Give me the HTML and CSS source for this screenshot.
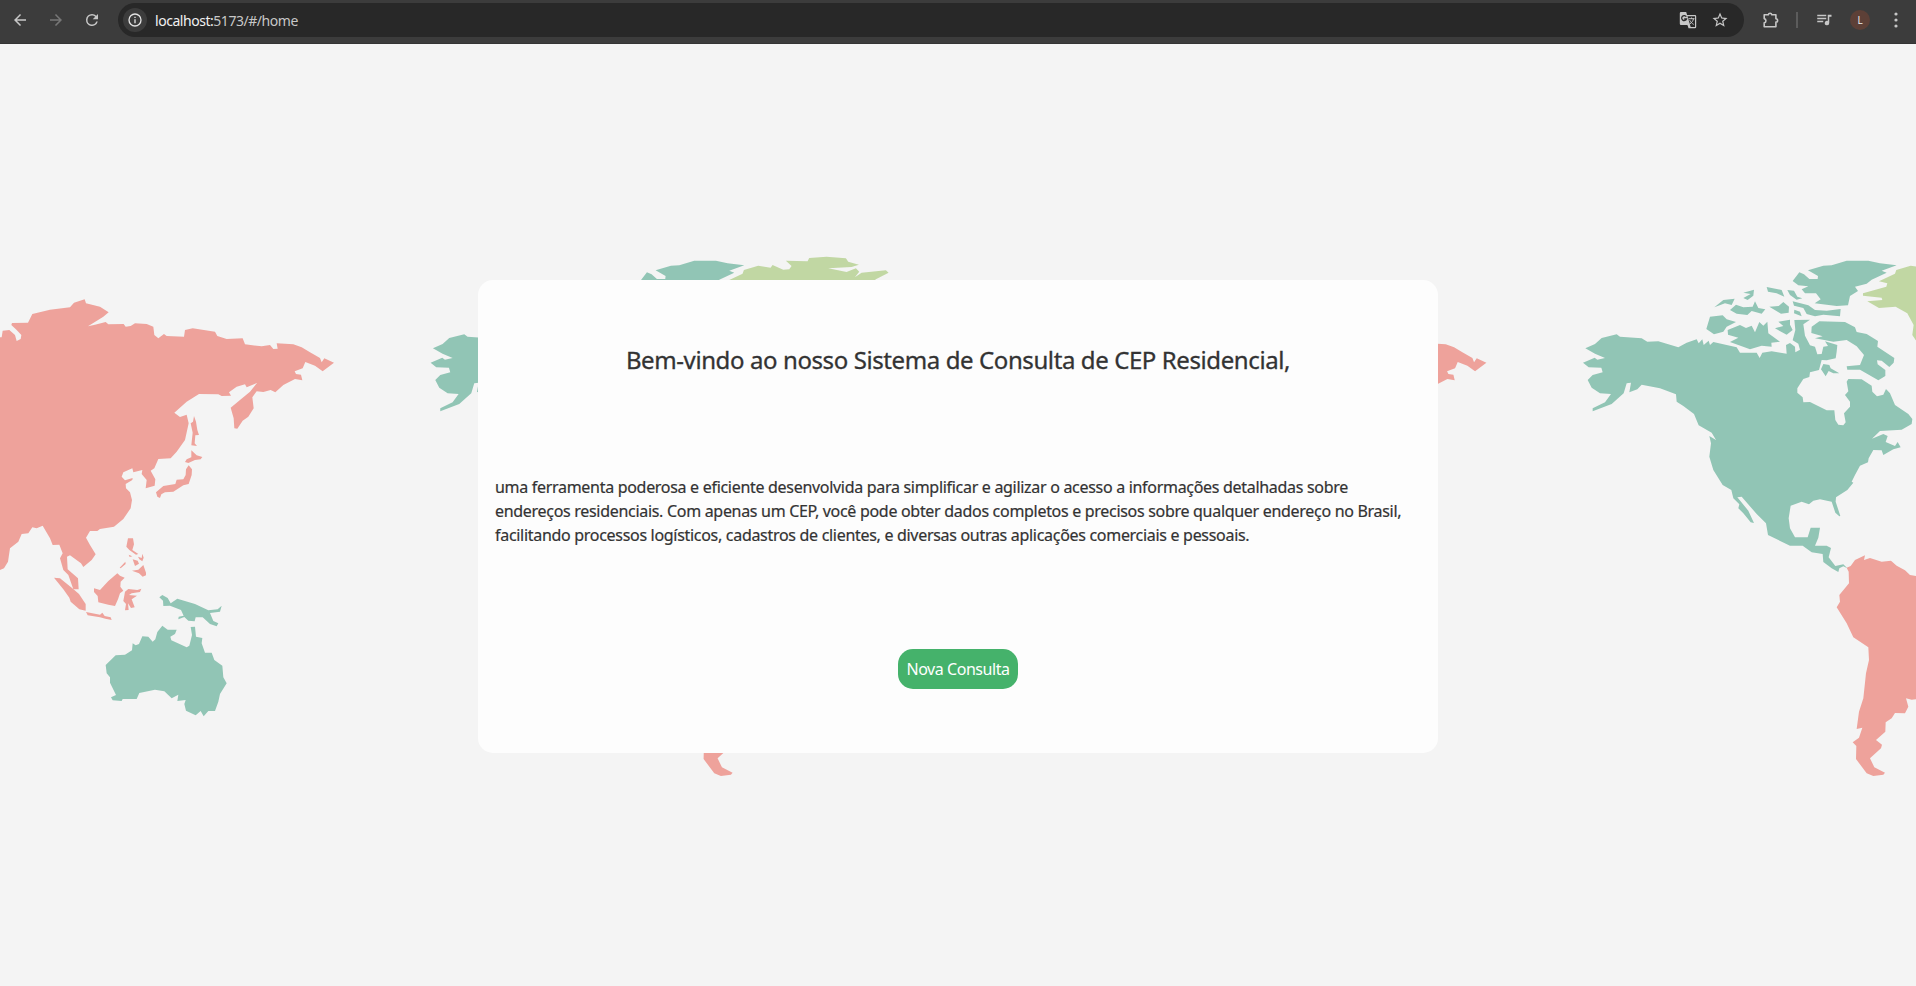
FILE: index.html
```html
<!DOCTYPE html>
<html lang="pt-BR">
<head>
<meta charset="utf-8">
<title>Consulta de CEP</title>
<link rel="stylesheet" href="styles.css">
</head>
<body>
<header class="toolbar">
  <nav class="nav">
    <svg class="icon" viewBox="0 0 24 24"><path d="M20 11H7.83l5.59-5.59L12 4l-8 8 8 8 1.41-1.41L7.83 13H20z"/></svg>
    <svg class="icon dim" viewBox="0 0 24 24"><path d="M4 13h12.17l-5.59 5.59L12 20l8-8-8-8-1.41 1.41L16.17 11H4z"/></svg>
    <svg class="icon" viewBox="0 0 24 24"><path d="M17.65 6.35A7.96 7.96 0 0 0 12 4a8 8 0 1 0 7.73 10h-2.08A6 6 0 1 1 12 6c1.66 0 3.14.69 4.22 1.78L13 11h7V4z"/></svg>
  </nav>
  <div class="address">
    <span class="info"><svg class="info-icon" viewBox="0 0 24 24"><path d="M11 7h2v2h-2zm0 4h2v6h-2zm1-9a10 10 0 1 0 0 20 10 10 0 0 0 0-20zm0 18a8 8 0 1 1 0-16 8 8 0 0 1 0 16z"/></svg></span>
    <span class="url"><b>localhost:</b>5173/#/home</span>
    <svg class="translate" viewBox="0 0 18 18"><path d="M2 1h5.200l.9 3H16a1.200 1.200 0 0 1 1.200 1.200V16a1.200 1.200 0 0 1-1.200 1.200H9.500L8.600 14H2A1.200 1.200 0 0 1 .8 12.800V2.200A1.200 1.200 0 0 1 2 1zm6.500 4.200 3.200 10.800h4.300V5.200z" fill-rule="evenodd"/><path class="g-mark" d="M7.300 5.700A2.500 2.500 0 1 0 7.500 8H5.200"/><path class="g-line" d="M9.500 7.700h6M12.500 6.500v1.200M14.500 7.700c-.4 2.200-1.800 4-3.800 5.300M10.700 9.200c.8 1.700 2.200 3.200 4 4.200M9 14.200l1.500 2.200"/></svg>
    <svg class="star" viewBox="0 0 24 24"><path d="m22 9.240-7.190-.62L12 2 9.190 8.630 2 9.240l5.460 4.730L5.820 21 12 17.270 18.180 21l-1.630-7.030zM12 15.400l-3.760 2.270 1-4.280-3.320-2.880 4.380-.38L12 6.100l1.710 4.040 4.380.38-3.320 2.880 1 4.280z"/></svg>
  </div>
  <div class="tools">
    <svg class="puzzle" viewBox="0 0 18 18"><path d="M2.200 3.700h4.100a1.800 1.800 0 0 1 3.500 0h4.100v4a1.700 1.700 0 0 1 0 3.400v4.700H2.200v-3.900a2.200 2.200 0 0 0 0-4.300z"/></svg>
    <span class="divider"></span>
    <svg class="music" viewBox="0 0 24 24"><path d="M3 5h12v2H3zm0 4h12v2H3zm0 4h8v2H3zM17 5h5v2.500h-3V16a3 3 0 1 1-2-2.830z"/></svg>
    <span class="avatar">L</span>
    <svg class="dots" viewBox="0 0 6 18"><circle cx="3" cy="3" r="1.600"/><circle cx="3" cy="9" r="1.600"/><circle cx="3" cy="15" r="1.600"/></svg>
  </div>
</header>
<main class="page">
  <svg class="map" viewBox="0 44 1916 942">
    <defs>
      <g id="asia" class="coral">
        <g transform="translate(0 280) scale(.33333)">
          <path d="M-5 172 5 172 8 152 28 150 45 165 50 183 62 177 64 165 50 150 34 135 36 129 84 128 97 102 150 89 210 82 222 68 254 58 258 70 300 80 326 97 310 110 264 139 285 134 317 126 325 133 371 132 377 140 392 138 405 130 440 132 460 140 463 165 475 175 492 162 500 168 552 170 555 150 578 145 645 155 652 168 680 177 728 175 735 193 785 199 810 195 820 207 833 206 830 190 880 193 905 202 930 217 960 234 965 247 973 235 1002 248 968 274 945 257 916 246 908 265 884 274 888 282 903 284 907 301 885 297 850 315 826 337 812 330 790 336 770 334 757 352 761 385 745 410 728 422 712 446 703 445 701 415 692 383 720 360 750 335 771 309 740 322 735 313 710 320 687 337 693 347 665 348 655 343 597 342 560 365 523 398 540 411 560 404 566 430 555 480 530 515 512 535 475 537 463 565 452 572 466 598 464 617 437 625 440 600 425 582 427 570 400 577 397 565 370 577 365 590 375 601 398 594 397 600 377 612 378 625 390 637 396 660 392 685 370 717 342 740 300 747 292 753 270 753 258 773 270 795 287 823 275 840 250 861 243 850 210 826 201 830 203 868 234 895 236 928 220 928 205 885 190 870 180 835 188 820 178 794 158 795 150 775 128 737 110 745 97 742 85 760 65 762 55 785 30 805 24 845 12 865-5 872z"/>
          <path d="M582 408 588 425 592 450 597 465 586 466 584 490 591 498 574 496 578 458 572 430 579 425zM574 511 590 526 607 531 602 538 585 540 565 549 555 546 560 538 574 532zM566 556 576 568 575 585 566 612 550 616 520 635 495 637 484 643 480 654 472 650 468 637 490 618 526 612 530 599 550 598 557 585 558 568z"/>
          <path d="M384 775 399 775 402 793 397 810 415 822 408 824 388 810 379 800zM414 830 425 834 427 821 431 833 427 844 418 838zM386 824 397 829 389 831zM398 838 413 842 417 851 405 858zM376 845 377 852 362 865 359 863zM396 872 415 869 430 855 438 878 438 886 428 890 417 880z"/>
          <path d="M162 893 180 895 217 925 237 942 257 972 257 992 238 988 212 965 208 953 190 928zM282 925 300 930 325 903 352 880 360 887 374 893 362 905 361 920 370 932 360 940 354 958 345 978 325 974 295 967 293 948 282 936zM375 935 385 927 412 930 424 926 420 936 395 940 387 945 411 947 395 958 404 982 393 984 384 970 386 990 375 991 378 972 370 963zM258 996 300 1004 307 998 314 1008 332 1012 335 1020 316 1016 300 1012 263 1006z"/>
        </g>
      </g>
      <g id="america">
        <g class="teal" transform="translate(1560 240) scale(.33333)">
          <path d="M76 325 105 312 125 294 170 283 180 290 245 295 262 305 295 304 355 322 380 308 410 298 416 310 427 298 431 315 446 302 450 315 460 306 530 322 540 338 590 338 599 354 607 338 635 334 680 341 678 315 690 309 705 320 706 337 720 329 715 311 698 301 706 270 703 240 750 239 730 253 735 287 750 316 765 320 772 343 785 342 790 320 804 318 795 304 832 315 830 335 827 355 800 361 785 360 777 390 750 397 748 411 730 417 712 445 712 458 728 472 730 487 750 486 800 511 823 511 826 540 835 554 850 556 857 547 852 520 870 500 870 485 855 465 865 454 860 425 865 417 905 418 935 437 937 455 951 469 970 464 978 447 990 460 1005 495 1045 522 1057 537 1055 552 1025 569 960 573 936 596 970 582 983 588 977 606 1005 618 1013 606 1022 622 1000 628 970 645 965 631 940 630 926 655 924 667 900 677 885 705 875 725 880 728 862 750 828 772 827 785 841 828 838 829 826 818 815 785 780 778 760 782 747 793 725 785 692 797 686 835 690 865 705 892 743 892 752 863 780 863 775 893 765 917 800 917 813 924 806 952 826 978 850 973 862 985 850 979 838 985 835 996 815 985 790 966 788 942 755 937 728 917 690 917 624 885 618 850 590 822 545 770 532 772 565 812 582 849 572 847 550 820 535 805 538 793 520 775 514 750 488 735 460 690 448 650 453 610 448 588 468 600 455 578 416 556 402 522 370 498 350 485 348 463 300 445 245 434 232 448 208 457 213 428 200 430 191 460 155 492 98 514 98 505 135 487 153 462 120 460 95 443 83 420 98 405 128 397 124 383 86 382 69 368 104 353 112 359 135 354 105 341z"/>
          <path d="M450 230 488 226 500 238 528 246 500 260 490 275 462 283 439 267zM503 270 540 255 558 264 575 257 585 277 598 246 610 257 622 245 625 280 660 305 634 308 635 320 605 317 570 328 510 306 535 293 504 284zM645 265 670 258 655 245 690 239 690 254 698 270 680 284zM463 202 490 180 524 176 515 195 495 190zM510 210 528 194 550 202 578 200 585 184 595 204 616 208 605 221 575 213 562 225 530 221zM550 158 582 149 580 167 563 180 550 174 572 162zM620 141 665 150 673 170 650 160 624 155zM628 200 656 198 670 186 687 200 686 218 663 221zM682 150 702 152 712 170 727 175 710 179 690 165zM698 184 745 196 765 210 800 212 842 207 840 229 790 224 765 229 740 222 730 204 702 197zM703 209 720 215 725 229 702 220z"/>
          <path d="M698 123 718 97 732 103 748 117 773 117 774 108 744 91 790 77 815 76 860 62 925 62 960 70 1010 76 965 92 980 98 935 119 920 131 885 140 894 153 870 168 864 196 830 198 800 194 764 190 782 178 768 160 735 160 725 148 745 139 715 136zM755 260 778 244 855 246 885 262 890 276 920 282 954 303 952 320 1003 354 1001 368 988 381 965 362 951 361 953 373 976 390 976 408 955 421 900 389 862 389 860 379 900 375 912 345 890 319 860 300 820 305 765 295 788 289 754 279zM783 388 790 372 808 375 812 385 838 400 820 400 806 393 797 409z"/>
        </g>
        <path class="coral" transform="translate(1660 440) scale(.33333)" d="M560 383 572 378 585 360 615 346 612 360 630 354 665 365 693 362 710 377 735 391 750 405 790 412 850 480 820 680 790 776 755 779 738 775 745 800 735 820 705 819 695 835 677 847 676 875 648 900 666 914 663 925 630 955 643 982 675 998 670 1004 640 1008 620 1000 588 957 589 918 578 907 597 893 607 863 590 867 597 815 610 775 618 700 627 660 625 622 580 592 560 550 530 502 540 485 538 465 567 430 566 395z"/>
        <path class="lime" transform="translate(1572.300 240) scale(.33333)" d="M872 160 942 140 945 130 920 124 968 101 972 90 1015 77 1052 83 1058 75 1090 89 1108 88 1115 78 1098 62 1163 64 1168 54 1220 50 1278 55 1285 65 1317 74 1295 81 1225 85 1280 96 1308 85 1318 95 1305 112 1325 98 1398 91 1406 98 1368 118 1320 160 1210 230 1160 290 1070 350 1050 310 1030 300 1020 285 1024 255 1005 220 970 200 920 204 885 184 930 180 928 173 872 167z"/>
      </g>
    </defs>
    <use href="#asia"/>
    <use href="#asia" x="1152.400"/>
    <use href="#america"/>
    <use href="#america" x="-1152.400"/>
    <g class="teal" transform="translate(0 520) scale(.33333)">
      <path d="M478 232 487 225 503 234 512 250 532 236 585 252 625 271 653 268 665 257 660 275 630 279 640 303 655 310 650 319 630 312 608 292 587 292 584 304 565 302 553 291 535 298 536 290 551 287 543 270 510 257 490 258 489 242z"/>
      <path d="M317 435 347 406 375 404 396 391 398 370 407 376 417 372 427 349 445 350 458 365 466 358 472 336 487 317 503 329 530 329 525 342 511 350 514 361 560 382 568 377 576 345 572 321 585 320 588 350 607 354 605 370 615 398 635 398 643 420 667 437 670 472 680 490 660 522 655 545 645 573 625 573 611 589 602 573 587 586 558 572 553 552 557 540 532 543 535 524 515 535 493 514 465 509 418 519 410 537 368 537 365 543 338 541 333 532 348 525 330 488 330 472 320 460z"/>
    </g>
  </svg>
  <section class="card">
    <h1 class="title">Bem-vindo ao nosso Sistema de Consulta de CEP Residencial,</h1>
    <p class="text"><span>uma ferramenta poderosa e eficiente desenvolvida para simplificar e agilizar o acesso a informações detalhadas sobre</span> <span>endereços residenciais. Com apenas um CEP, você pode obter dados completos e precisos sobre qualquer endereço no Brasil,</span> <span>facilitando processos logísticos, cadastros de clientes, e diversas outras aplicações comerciais e pessoais.</span></p>
    <button class="button">Nova Consulta</button>
  </section>
</main>
</body>
</html>
```
FILE: styles.css
```css
* { box-sizing: border-box; }
body { margin: 0; height: 986px; overflow: hidden; display: flex; flex-direction: column; background: #f4f4f4; font-family: "Segoe UI", "Noto Sans", "Open Sans", sans-serif; }
svg { display: block; flex: none; }

.toolbar { height: 44px; flex: none; display: flex; align-items: flex-start; background: #3c3c3c; border-bottom: 1px solid #343434; padding: 3px 0 0 11px; color: #c7c7c7; }
.nav { width: 107px; height: 34px; display: flex; align-items: center; gap: 18px; }
.icon { width: 18px; height: 18px; fill: #c7c7c7; }
.dim { fill: #777; }
.address { width: 1626px; height: 34px; border-radius: 17px; background: #282828; display: flex; align-items: center; padding: 0 15px 0 5px; }
.info { width: 24px; height: 24px; border-radius: 50%; background: #3c3c3c; display: grid; place-items: center; }
.info-icon { width: 16px; height: 16px; fill: #e3e3e3; }
.url { flex: 1; margin-left: 8px; font-size: 14px; color: #c7c7c7; letter-spacing: -.46px; }
.url b { font-weight: 400; color: #f0f0f0; }
.translate { width: 18px; height: 18px; fill: #c7c7c7; }
.g-mark { fill: none; stroke: #282828; stroke-width: 1.300; }
.g-line { fill: none; stroke: #c7c7c7; stroke-width: 1; }
.star { width: 18px; height: 18px; margin-left: 14px; fill: #c7c7c7; }
.tools { height: 34px; flex: 1; display: flex; align-items: center; padding-left: 18px; }
.puzzle { width: 18px; height: 18px; fill: none; stroke: #c7c7c7; stroke-width: 1.600; stroke-linejoin: round; }
.divider { width: 2px; height: 16px; margin: 0 17px 0 16px; background: #5c5c5c; }
.music { width: 18px; height: 18px; fill: #c7c7c7; }
.avatar { width: 20px; height: 20px; margin: 0 19px 0 17px; border-radius: 50%; background: #5d4037; color: #eee; font-size: 10px; line-height: 20px; text-align: center; }
.dots { width: 6px; height: 18px; margin-left: 4px; fill: #c7c7c7; }

.page { position: relative; flex: 1; display: flex; justify-content: center; align-items: flex-start; padding-top: 236px; }
.map { position: absolute; top: 0; left: 0; width: 1916px; height: 942px; filter: blur(.5px); }
.coral { fill: #eea29b; }
.teal { fill: #91c5b5; }
.lime { fill: #c1d7a3; }

.card { position: relative; width: 960px; height: 473px; border-radius: 15px; background: #fdfdfd; color: #333; display: flex; flex-direction: column; align-items: center; padding: 62px 17px 0; }
.title { margin: 0; font-size: 24px; line-height: 36px; font-weight: 400; letter-spacing: -.4px; white-space: nowrap; -webkit-text-stroke: .3px #333; }
.text { align-self: stretch; margin: 97px 0 0; font-size: 16px; line-height: 24px; letter-spacing: -.3px; -webkit-text-stroke: .2px #333; }
.text span { display: block; width: max-content; }
.button { margin: 102px 0 0; width: 120px; height: 40px; padding: 0; border: 0; border-radius: 15px; background: #45b26b; color: #fff; font: 16px/24px "Segoe UI", "Noto Sans", sans-serif; letter-spacing: -.45px; white-space: nowrap; }
```
